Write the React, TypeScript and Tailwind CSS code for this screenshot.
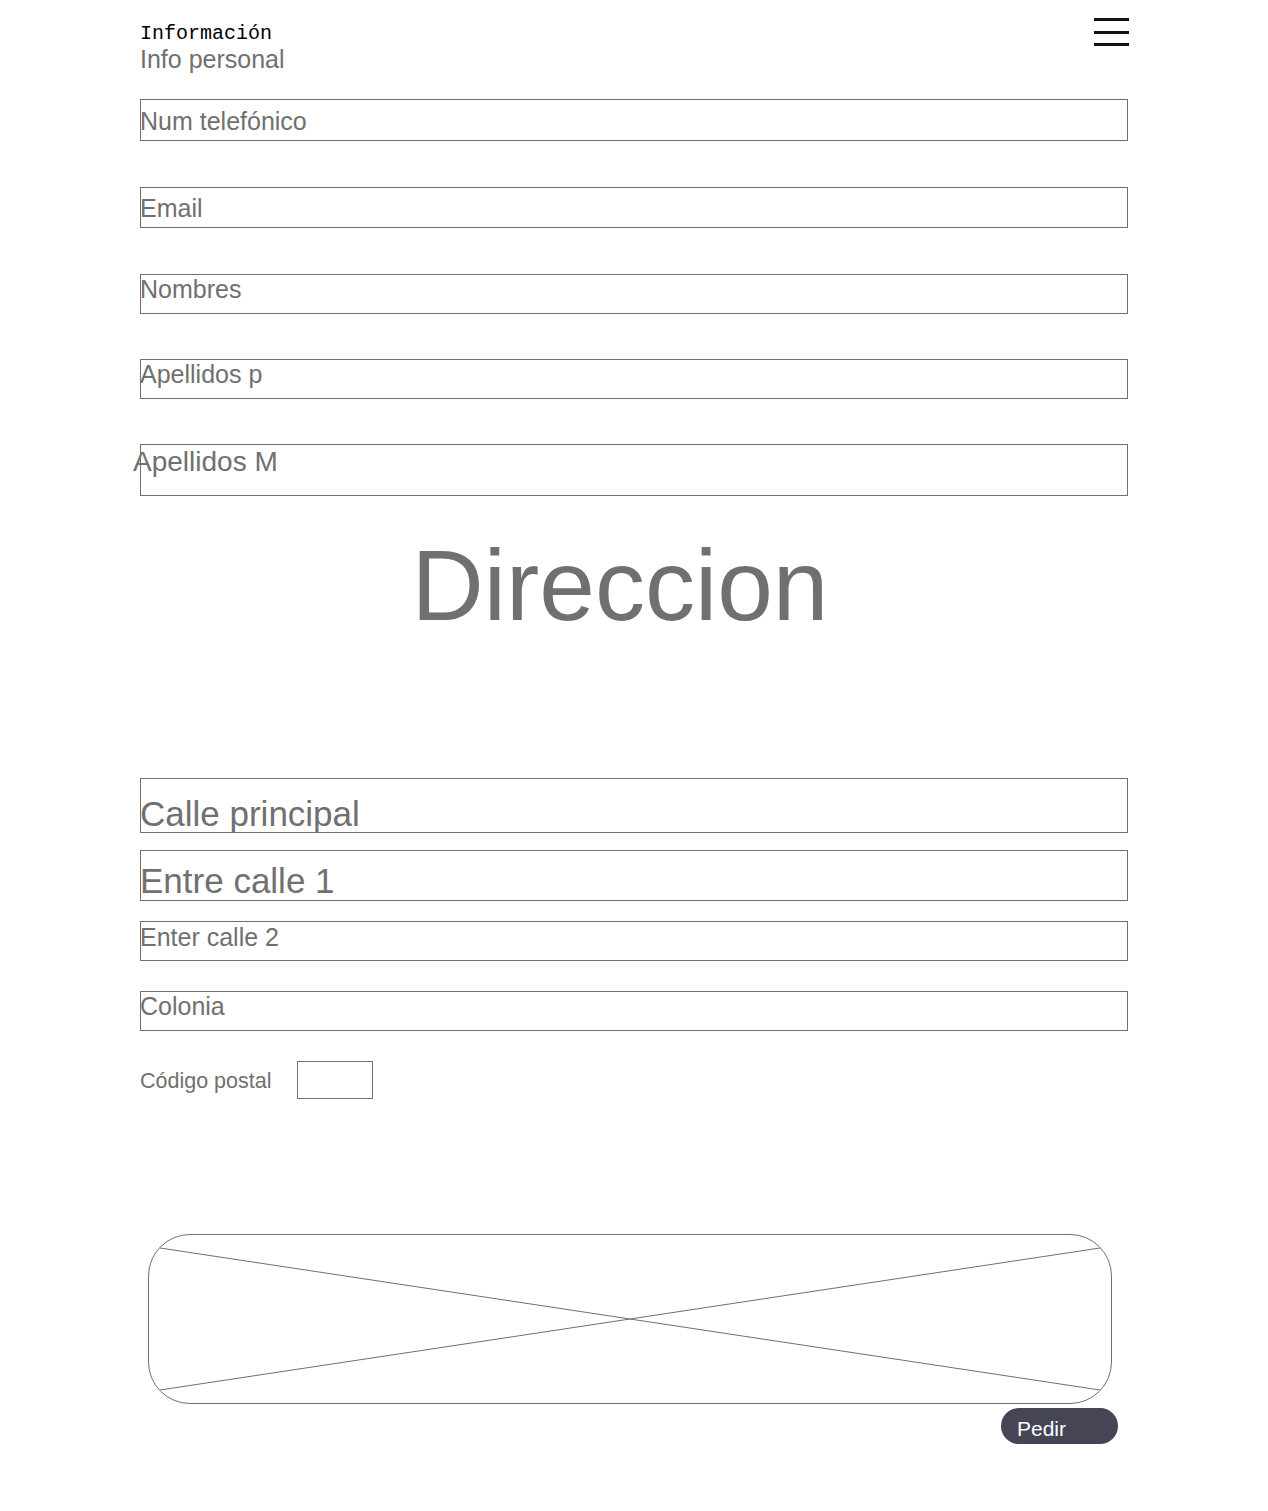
import React from "react";

type FieldProps = {
  label: string;
  box: string; // height + margin classes
  text: string; // font size + top offset classes
  shift?: string; // horizontal offset of the label
};

function Field({ label, box, text, shift = "-ml-px" }: FieldProps) {
  return (
    <div className={`w-full border border-[#707070] ${box}`}>
      <div className={`leading-none whitespace-nowrap text-[#707070] ${shift} ${text}`}>{label}</div>
    </div>
  );
}

function Hamburger() {
  return (
    <button className="flex flex-col gap-[9.5px] pt-[18px] -mr-px">
      <span className="block h-[3px] w-[35px] bg-[#111]" />
      <span className="block h-[3px] w-[35px] bg-[#111]" />
      <span className="block h-[3px] w-[35px] bg-[#111]" />
    </button>
  );
}

function ImagePlaceholder() {
  return (
    <div className="ml-[8px] h-[170px] w-[964px] rounded-[42px] border border-[#707070] overflow-hidden">
      <svg width="964" height="170" viewBox="0 0 964 170" className="block -m-px">
        <line x1="12" y1="14" x2="952" y2="156" stroke="#707070" strokeWidth="1" />
        <line x1="12" y1="156" x2="952" y2="14" stroke="#707070" strokeWidth="1" />
      </svg>
    </div>
  );
}

export default function App() {
  return (
    <div
      className="min-h-[1511px] w-full bg-white px-[140px] pb-[67px]"
      style={{ fontFamily: '"Liberation Sans", Arial, Helvetica, sans-serif' }}
    >
      {/* header */}
      <div className="flex items-start justify-between">
        <div className="pt-[24px]">
          <div
            className="text-[20px] leading-none text-black"
            style={{ fontFamily: '"Liberation Mono", "DejaVu Sans Mono", monospace' }}
          >
            Información
          </div>
          <div className="mt-[3px] text-[25px] leading-none text-[#707070]">Info personal</div>
        </div>
        <Hamburger />
      </div>

      {/* info personal */}
      <Field label="Num telefónico" box="mt-[27px] h-[42px]" text="text-[25px] pt-[9px]" />
      <Field label="Email" box="mt-[46px] h-[41px]" text="text-[25px] pt-[8px]" />
      <Field label="Nombres" box="mt-[46px] h-[40px]" text="text-[25px] pt-[2px]" />
      <Field label="Apellidos p" box="mt-[45px] h-[40px]" text="text-[25px] pt-[2px]" />
      <Field label="Apellidos M" box="mt-[45px] h-[52px]" text="text-[28px] pt-[3px]" shift="-ml-[8px]" />

      <h1 className="mt-[39px] text-center text-[100px] leading-none text-[#707070] pr-[28px]">Direccion</h1>

      {/* direccion */}
      <Field label="Calle principal" box="mt-[143px] h-[55px]" text="text-[35px] pt-[17px]" />
      <Field label="Entre calle 1" box="mt-[17px] h-[51px]" text="text-[35px] pt-[12px]" />
      <Field label="Enter calle 2" box="mt-[20px] h-[40px]" text="text-[25px] pt-[3px]" />
      <Field label="Colonia" box="mt-[30px] h-[40px]" text="text-[25px] pt-[2px]" />

      <div className="mt-[30px] flex items-start gap-[26px]">
        <span className="mt-[10px] text-[21.5px] leading-none text-[#707070]">Código postal</span>
        <div className="h-[38px] w-[76px] border border-[#707070]" />
      </div>

      <div className="mt-[135px]">
        <ImagePlaceholder />
      </div>

      <div className="mt-[4px] flex justify-end pr-[10px]">
        <button className="flex h-[36px] w-[117px] items-center rounded-full bg-[#454556] pl-[16px] pt-[4px] text-left text-[21px] leading-none text-white">
          Pedir
        </button>
      </div>
    </div>
  );
}
